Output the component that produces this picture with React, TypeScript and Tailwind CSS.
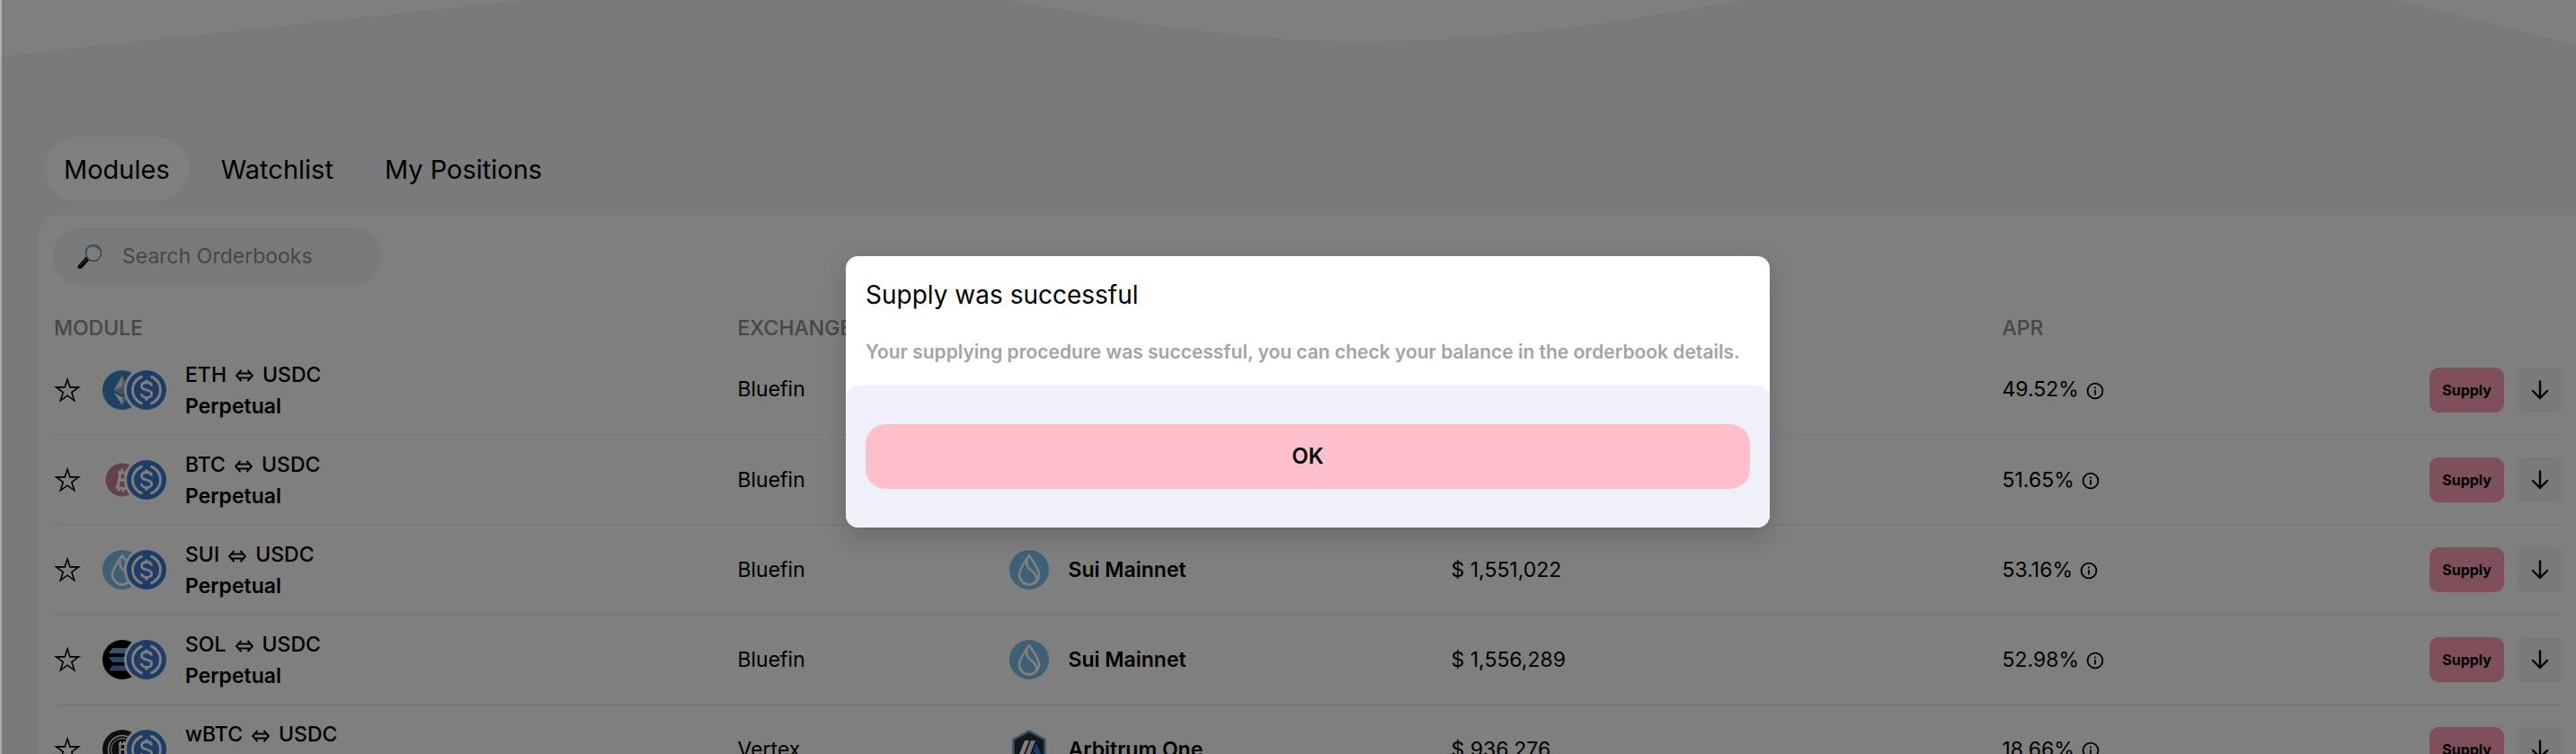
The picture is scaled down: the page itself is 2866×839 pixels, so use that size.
import React from "react";

type Coin = "eth" | "btc" | "sui" | "sol" | "wbtc";

interface Orderbook {
  base: string;
  coin: Coin;
  exchange: string;
  chain?: "sui" | "arbitrum";
  tvl?: string;
  apr: string;
}

const orderbooks: Orderbook[] = [
  { base: "ETH", coin: "eth", exchange: "Bluefin", apr: "49.52%" },
  { base: "BTC", coin: "btc", exchange: "Bluefin", apr: "51.65%" },
  { base: "SUI", coin: "sui", exchange: "Bluefin", chain: "sui", tvl: "$ 1,551,022", apr: "53.16%" },
  { base: "SOL", coin: "sol", exchange: "Bluefin", chain: "sui", tvl: "$ 1,556,289", apr: "52.98%" },
  { base: "wBTC", coin: "wbtc", exchange: "Vertex", chain: "arbitrum", tvl: "$ 936,276", apr: "18.66%" },
];

function SuiDrop() {
  return (
    <>
      <circle cx="22" cy="22" r="22" fill="#7cc0ea" />
      <path
        d="M22 6c-3 5-11 14-11 21.500a11 11 0 0 0 22 0C33 20 25 11 22 6Z"
        fill="#7cc0ea"
        stroke="#fff"
        strokeWidth="2.600"
        strokeLinejoin="round"
      />
      <path
        d="M19.500 12c-1 8 3 9 7 12.500 3 2.700 4 6 3.500 9"
        fill="none"
        stroke="#fff"
        strokeWidth="2.600"
        strokeLinecap="round"
      />
    </>
  );
}

function BitcoinMark() {
  return (
    <g fill="none" stroke="#fff" strokeWidth="3" strokeLinejoin="round">
      <path d="M16 14h8.500a4 4 0 0 1 0 8H18M18 22h7a4.500 4.500 0 0 1 0 9h-9M18.500 14v17M20 10v4M25 10v4M20 31v4M25 31v4" transform="rotate(10 22 22)" />
    </g>
  );
}

function CoinIcon({ coin }: { coin: Coin }) {
  return (
    <svg viewBox="0 0 44 44" className="size-11" aria-hidden="true">
      {coin === "eth" && (
        <>
          <circle cx="22" cy="22" r="22" fill="#3c84c4" />
          <path d="M22 6 13 22l9 5Z" fill="#e8e8ec" />
          <path d="m22 6 9 16-9 5Z" fill="#b4b4bc" />
          <path d="m13 22 9-4 9 4-9 5Z" fill="#8fa6bc" />
          <path d="m13 25 9 5v9Z" fill="#f4f4f8" />
          <path d="m31 25-9 5v9Z" fill="#8cb8dc" />
        </>
      )}
      {coin === "btc" && (
        <>
          <circle cx="22" cy="22" r="18.500" fill="#c98090" />
          <BitcoinMark />
        </>
      )}
      {coin === "sui" && <SuiDrop />}
      {coin === "sol" && (
        <>
          <circle cx="22" cy="22" r="22" fill="#000" />
          <path d="M11 9h24l-4 6H7Z" fill="#6aa5e0" />
          <path d="M7 19h24l4 6H11Z" fill="#4b8cd8" />
          <path d="M11 28.500h24l-4 6H7Z" fill="#5f79d0" />
        </>
      )}
      {coin === "wbtc" && (
        <>
          <circle cx="22" cy="22" r="22" fill="#1c1c1e" />
          <circle cx="22" cy="22" r="15.500" fill="none" stroke="#fff" strokeWidth="1.500" />
          <circle cx="22" cy="22" r="12.500" fill="none" stroke="#fff" strokeWidth="1" />
          <path d="M18 16h6a3 3 0 0 1 0 6h-5m0 0h6a3 3 0 0 1 0 6h-7M19.500 16v12M20 13v3M24 13v3M20 28v3M24 28v3" fill="none" stroke="#fff" strokeWidth="2.200" />
        </>
      )}
    </svg>
  );
}

function UsdcIcon() {
  return (
    <svg viewBox="0 0 44 44" className="size-11" aria-hidden="true">
      <circle cx="22" cy="22" r="22" fill="#3a79cc" />
      <g fill="none" stroke="#fff" strokeWidth="2.800">
        <path d="M17.500 6.800a16 16 0 0 0 0 30.400M26.500 6.800a16 16 0 0 1 0 30.400" />
        <path d="M27.500 17.500c0-2.500-2.300-4-5.500-4s-5.500 1.500-5.500 4.200c0 5.800 11.200 2.800 11.200 8.500 0 2.700-2.500 4.300-5.700 4.300s-5.700-1.800-5.700-4.500M22 10.500v3M22 30.500v3.300" />
      </g>
    </svg>
  );
}

function ArbitrumIcon() {
  return (
    <svg viewBox="0 0 44 44" className="size-11" aria-hidden="true">
      <path d="M22 1.500 39.500 11v22L22 42.500 4.500 33V11Z" fill="#2d2f36" stroke="#6aa8d4" strokeWidth="2.500" />
      <path d="M17 12h5l-9 23H8Z" fill="#fff" />
      <path d="M24 12h5l-9 23h-5Z" fill="#e4e4e8" />
      <path d="m30 15 7 17-4 3-6-12Z" fill="#2f7fe6" />
      <path d="m26 25 5 11-3 2-5-6Z" fill="#2f7fe6" />
    </svg>
  );
}

function StarIcon() {
  return (
    <svg viewBox="0 0 30 30" className="size-[30px]" fill="none" stroke="#000" strokeWidth="1.600" aria-hidden="true">
      <path d="m15 3 2.900 8.900h9.600l-7.700 5.700 2.900 9.200-7.700-5.600-7.700 5.600 2.900-9.200-7.700-5.700h9.600Z" />
    </svg>
  );
}

function InfoIcon() {
  return (
    <svg viewBox="0 0 20 20" className="mt-0.5 size-5" aria-hidden="true">
      <circle cx="10" cy="10" r="8.400" fill="none" stroke="#000" strokeWidth="1.800" />
      <path d="M10 9v5.500M10 5.500v2" stroke="#000" strokeWidth="1.800" />
    </svg>
  );
}

function SwapIcon() {
  return (
    <svg viewBox="0 0 20 14" className="mt-0.5 h-3.5 w-5" fill="none" stroke="#000" strokeWidth="2" aria-hidden="true">
      <path d="M6.500.8 1.200 7l5.300 6.200M13.500.8 18.800 7l-5.300 6.200M3.500 4.500h13M3.500 9.500h13" />
    </svg>
  );
}

function DownIcon() {
  return (
    <svg viewBox="0 0 20 22" className="h-[22px] w-5" fill="none" stroke="#000" strokeWidth="2.400" strokeLinecap="round" strokeLinejoin="round" aria-hidden="true">
      <path d="M10 1.500v18.500M2 12 10 20l8-8" />
    </svg>
  );
}

function MagnifierIcon() {
  return (
    <svg viewBox="0 0 28 28" className="size-7" aria-hidden="true">
      <path d="m3 26 8-9" stroke="#111" strokeWidth="5" strokeLinecap="round" />
      <path d="m4 23.500 6-6.500" stroke="#777" strokeWidth="1" strokeLinecap="round" />
      <ellipse cx="18" cy="10.500" rx="8.500" ry="9" fill="#f4f8fb" stroke="#8d8d90" strokeWidth="1.600" />
      <path d="M14 3.500a8 8 0 0 1 10 3" fill="none" stroke="#5fa4d4" strokeWidth="1.200" />
    </svg>
  );
}

function Waves() {
  return (
    <svg viewBox="0 0 2866 64" preserveAspectRatio="none" className="block h-16 w-full" fill="#fff" aria-hidden="true">
      <path d="M0 0H585Q300 30 0 63Z" />
      <path d="M1120 0C1240 20 1360 46 1517 46S1810 22 1943 0Z" />
      <path d="M2660 0Q2770 22 2866 52V0Z" />
    </svg>
  );
}

const tabs = ["Modules", "Watchlist", "My Positions"];

function Row({ book }: { book: Orderbook }) {
  return (
    <tr className="h-[100px] border-b-2 border-[#f6f6f8]">
      <td>
        <div className="flex items-center">
          <button type="button" aria-label="Add to watchlist" className="ml-0.5">
            <StarIcon />
          </button>
          <div className="ml-6 flex items-center">
            <CoinIcon coin={book.coin} />
            <span className="-ml-5 rounded-full border-[3px] border-white">
              <UsdcIcon />
            </span>
          </div>
          <div className="ml-[18px] pt-0.5 leading-[35px]">
            <div className="flex items-center gap-2.5 font-medium">
              <span>{book.base}</span>
              <SwapIcon />
              <span>USDC</span>
            </div>
            <div className="font-semibold">Perpetual</div>
          </div>
        </div>
      </td>
      <td>{book.exchange}</td>
      <td>
        {book.chain && (
          <div className="flex items-center gap-[22px] font-semibold">
            {book.chain === "sui" ? (
              <svg viewBox="0 0 44 44" className="size-11" aria-hidden="true">
                <SuiDrop />
              </svg>
            ) : (
              <ArbitrumIcon />
            )}
            {book.chain === "sui" ? "Sui Mainnet" : "Arbitrum One"}
          </div>
        )}
      </td>
      <td>{book.tvl}</td>
      <td>
        <div className="flex items-center gap-2">
          {book.apr}
          <InfoIcon />
        </div>
      </td>
      <td>
        <div className="flex items-center justify-end gap-3.5">
          <button type="button" className="h-[50px] rounded-[10px] bg-[#ffa0b8] px-3.5 text-base font-bold">
            Supply
          </button>
          <button type="button" aria-label="Show details" className="flex h-[50px] w-[52px] items-center justify-center rounded-lg bg-[#f1f4f9]">
            <DownIcon />
          </button>
        </div>
      </td>
    </tr>
  );
}

export default function App() {
  return (
    <div className="relative h-screen overflow-hidden bg-[#f2f4f8] font-['Inter','Noto_Sans',sans-serif] text-black">
      <Waves />
      <main className="pt-[88px] pl-[43px]">
        <nav className="ml-[7px] flex gap-[15px] text-[29px]">
          {tabs.map((tab, i) => (
            <button
              key={tab}
              type="button"
              className={i === 0 ? "h-[72px] rounded-[36px] bg-white px-[21px] pt-0.5" : "h-[72px] rounded-[36px] px-[21px] pt-0.5"}
            >
              {tab}
            </button>
          ))}
        </nav>
        <section className="mt-[15px] rounded-tl-[24px] bg-white pt-3.5 pr-3.5 pl-[15px]">
          <label className="flex h-16 w-[368px] items-center gap-[22px] rounded-[32px] bg-[#f2f4f8] pl-7">
            <MagnifierIcon />
            <input
              type="text"
              aria-label="Search Orderbooks"
              placeholder="Search Orderbooks"
              className="w-64 bg-transparent text-[23px] outline-none placeholder:text-[#8e8e8e]"
            />
          </label>
          <table className="mt-[27px] w-full table-fixed border-collapse text-[23px]">
            <thead>
              <tr className="h-10 text-left text-[#8e8e8e]">
                <th className="w-[27.29%] pt-0.5 pl-0.5 font-medium">MODULE</th>
                <th className="w-[10.81%] pt-0.5 font-medium">EXCHANGE</th>
                <th className="w-[17.61%]" aria-label="Network" />
                <th className="w-[21.94%]" aria-label="Value" />
                <th className="w-[12%] pt-0.5 font-medium">APR</th>
                <th aria-label="Actions" />
              </tr>
            </thead>
            <tbody>
              {orderbooks.map((book) => (
                <Row key={book.base} book={book} />
              ))}
            </tbody>
          </table>
        </section>
      </main>

      <div className="absolute inset-0 border-l-2 border-black/30 bg-black/50 bg-clip-padding" />
      <div className="absolute inset-0 flex items-center justify-center pt-8 pl-11">
        <div role="dialog" aria-modal="true" aria-labelledby="dialog-title" className="w-[1028px] max-w-full rounded-[14px] bg-white shadow-[0_10px_28px_rgba(0,0,30,0.18)]">
          <div className="flex flex-col gap-[30px] px-[22px] pt-[25px] pb-[21px]">
            <h2 id="dialog-title" className="text-[28px] leading-9">
              Supply was successful
            </h2>
            <p className="text-[21px] leading-8 font-semibold whitespace-nowrap text-[#a4a4a4]">
              Your supplying procedure was successful, you can check your balance in the orderbook details.
            </p>
          </div>
          <div className="rounded-[14px] bg-[#f0f0fa] px-[22px] py-[43px]">
            <button type="button" className="h-[72px] w-full rounded-[22px] bg-[#ffc0cb] text-2xl font-semibold">
              OK
            </button>
          </div>
        </div>
      </div>
    </div>
  );
}
